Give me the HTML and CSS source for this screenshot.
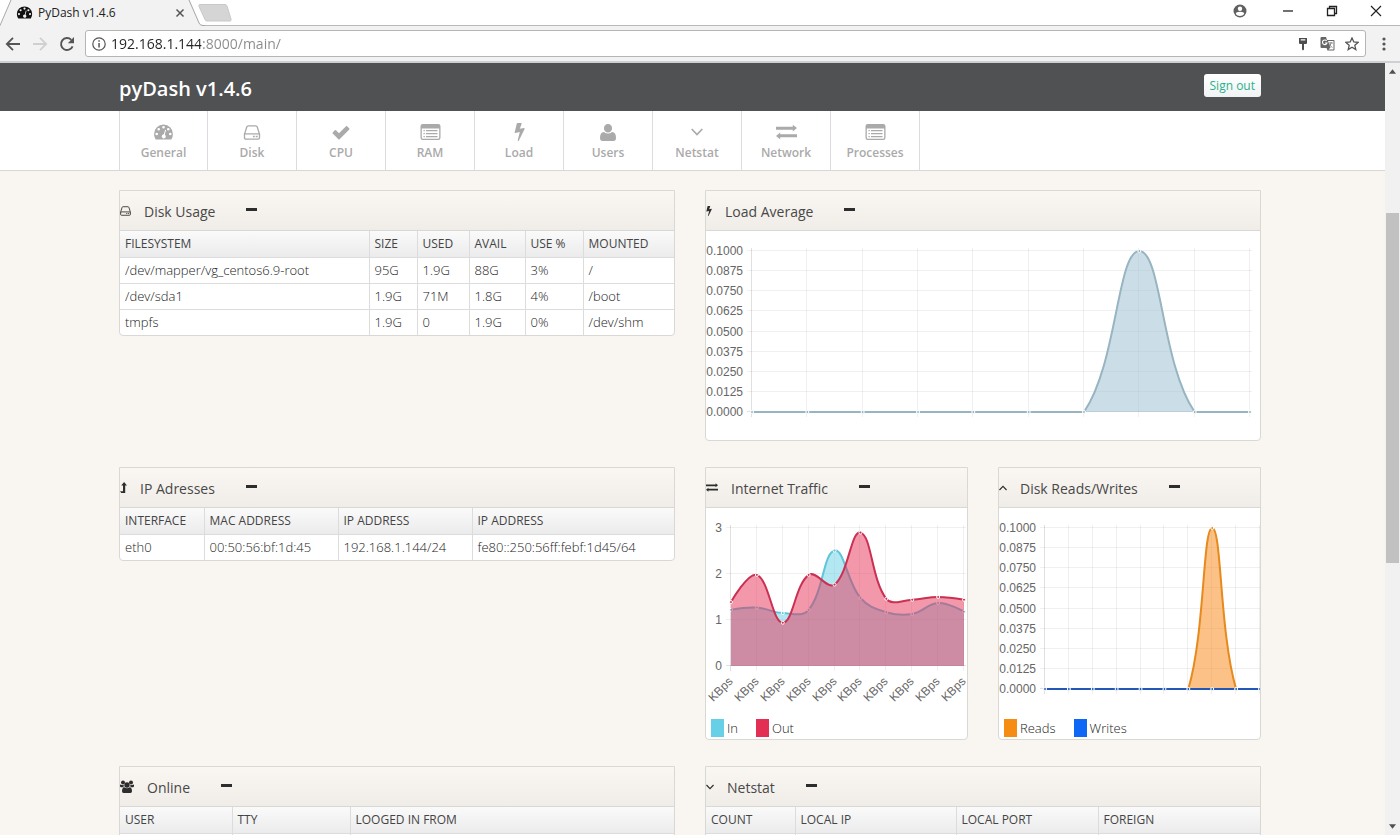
FILE: index.html
```html
<!DOCTYPE html>
<html lang="en">
<head>
<meta charset="utf-8">
<title>PyDash v1.4.6</title>
<link rel="stylesheet" href="styles.css">
</head>
<body>
<svg class="defs" aria-hidden="true">
  <symbol id="gauge" viewBox="0 0 21 17"><path fill-rule="evenodd" d="M10.500 .5A10 10 0 0 0 .5 10.500c0 2.100.6 4 1.600 5.600.2.300.5.400.8.400h15.200c.3 0 .6-.1.800-.4a10 10 0 0 0 1.600-5.600A10 10 0 0 0 10.500.5zM3.300 9.200a1.400 1.400 0 1 1 0 2.800 1.400 1.400 0 0 1 0-2.800zM5.400 4.200a1.400 1.400 0 1 1 0 2.800 1.400 1.400 0 0 1 0-2.800zM10.500 2a1.400 1.400 0 1 1 0 2.800 1.400 1.400 0 0 1 0-2.800zM15.600 4.200a1.400 1.400 0 1 1 0 2.800 1.400 1.400 0 0 1 0-2.800zM17.700 9.200a1.400 1.400 0 1 1 0 2.800 1.400 1.400 0 0 1 0-2.800zM12.200 6l1 .3-1.300 5a2.200 2.200 0 1 1-1-.3z"/></symbol>
  <symbol id="disk" viewBox="0 0 18 16"><path fill="none" stroke="currentColor" stroke-width="1.400" d="M1 9.500h16v4q0 1.500-1.500 1.500h-13Q1 15 1 13.500zM1.200 9.200 3.400 2.200Q3.800 1 5 1h8q1.200 0 1.600 1.200l2.200 7"/><path d="M10 11.500h2v1.500h-2zM13 11.500h2v1.500h-2z"/></symbol>
  <symbol id="check" viewBox="0 0 18 14"><path d="M17.300 2.900 15.200.8q-.6-.5-1.200 0L7 7.800 4 4.800q-.6-.5-1.200 0L.7 6.900q-.5.600 0 1.200l5.700 5.600q.6.500 1.200 0l9.700-9.600q.5-.6 0-1.200z"/></symbol>
  <symbol id="list" viewBox="0 0 20 16"><path fill-rule="evenodd" d="M2.200 0h15.600Q20 0 20 2.200v11.600q0 2.200-2.200 2.200H2.200Q0 16 0 13.800V2.200Q0 0 2.200 0zM1.300 4.500v9q0 1.200 1.200 1.200h15q1.200 0 1.200-1.200v-9z"/><path d="M3 6h1.300v1.200H3zM5.500 6H17v1.200H5.500zM3 9h1.300v1.200H3zM5.500 9H17v1.200H5.500zM3 12h1.300v1.200H3zM5.500 12H17v1.200H5.500z"/></symbol>
  <symbol id="bolt" viewBox="0 0 11 18"><path d="M10.400 5.200q.4.300.2.700L4.800 17.700q-.3.400-.8.300-.4-.2-.3-.6L5.800 8.900l-4.400 1.100q-.8 0-.7-.7L2.800.5q.2-.5.700-.5h3.500q.9.200.6.900L5.800 5.700l4.200-.8z"/></symbol>
  <symbol id="user" viewBox="0 0 16 17"><path d="M12 4.200A4 4 0 0 1 8 8.500a4 4 0 0 1-4-4.300A4 4 0 0 1 8 0a4 4 0 0 1 4 4.200zM4 8q1.600 1.500 4 1.500T12 8q4 .2 4 6 0 3-2.500 3h-11Q0 17 0 14q0-5.800 4-6z"/></symbol>
  <symbol id="down" viewBox="0 0 12 8"><path fill="none" stroke="currentColor" stroke-width="1.700" d="M.7 1 6 6.500 11.300 1"/></symbol>
  <symbol id="up" viewBox="0 0 12 8"><path fill="none" stroke="currentColor" stroke-width="1.700" d="M.7 7 6 1.500 11.300 7"/></symbol>
  <symbol id="swap" viewBox="0 0 20 14"><path d="M0 2h16V0L20 3.300 16 6.600V4.800H0zM20 9.200H4V7.400L0 10.700 4 14v-2H20z"/></symbol>
  <symbol id="level" viewBox="0 0 7 11"><path d="M0 9.200h3V3.600H1.200L4.100 0 7 3.600H5.200V11H1.300z"/></symbol>
  <symbol id="group" viewBox="0 0 14 13"><circle cx="3" cy="2.500" r="2"/><circle cx="11" cy="2.500" r="2"/><path d="M0 4.500q1 0 2 .6l2 .2-.7 2H.8Q0 7 0 6zM14 4.500q-1 0-2 .6l-2 .2.700 2h2.500Q14 7 14 6z"/><circle cx="7" cy="5" r="2.700"/><path d="M4.400 7.300q2.600 1.800 5.200 0 2.400.3 2.400 4 0 1.700-1.500 1.700h-7Q2 13 2 11.300q0-3.700 2.400-4z"/></symbol>
</svg>

<header class="browser">
  <div class="tabstrip">
    <div class="tab">
      <svg class="tab-shape" viewBox="0 0 205 26" aria-hidden="true"><path d="M0 26 11 0h179l11 25.500h4V26z" fill="#f2f2f2"/><path d="M0 25.500 11 0M189 0l10 23q1 2.500 4 2.500h2" fill="none" stroke="#a8a8a8"/></svg>
      <svg class="fav" aria-hidden="true"><use href="#gauge"/></svg>
      <span class="tab-title">PyDash v1.4.6</span>
      <button class="tab-close" aria-label="Close tab"><svg viewBox="0 0 10 10"><path d="m1.500 1.500 7 7m0-7-7 7" stroke="#555" stroke-width="1.500"/></svg></button>
    </div>
    <button class="newtab" aria-label="New tab"><svg viewBox="0 0 34 18"><path d="M2 .5h25q1.500 0 2 1.500l4 13q.6 2-1 2H9q-1.500 0-2-1.500L1 2.500Q.4.500 2 .5z" fill="#d5d5d5" stroke="#c9c9c9"/></svg></button>
    <div class="window-buttons">
      <button aria-label="Profile"><svg width="14" height="14" viewBox="0 0 14 14"><circle cx="7" cy="7" r="6.500" fill="#606060"/><circle cx="7" cy="4.800" r="2.200" fill="#fff"/><path d="M2.800 10q0-2.300 4.200-2.300t4.200 2.300Q9.700 12 7 12t-4.200-2z" fill="#fff"/></svg></button>
      <button aria-label="Minimize"><svg width="12" height="12" viewBox="0 0 12 12"><path d="M1 6h10" stroke="#222" stroke-width="1.300"/></svg></button>
      <button aria-label="Restore"><svg width="12" height="12" viewBox="0 0 12 12" fill="none" stroke="#222" stroke-width="1.300"><path d="M1.500 3.500h7v7h-7zM3.500 3.500v-2h7v7h-2"/></svg></button>
      <button aria-label="Close"><svg width="12" height="12" viewBox="0 0 12 12"><path d="m1 1 10 10M11 1 1 11" stroke="#222" stroke-width="1.200"/></svg></button>
    </div>
  </div>
  <div class="toolbar">
    <button aria-label="Back"><svg width="16" height="16" viewBox="0 0 16 16" fill="none" stroke="#555" stroke-width="1.800"><path d="M15 8H2M8 1.800 1.800 8 8 14.200"/></svg></button>
    <button aria-label="Forward"><svg width="16" height="16" viewBox="0 0 16 16" fill="none" stroke="#d0d0d0" stroke-width="1.800"><path d="M1 8h13M8 1.800 14.200 8 8 14.200"/></svg></button>
    <button aria-label="Reload"><svg width="16" height="16" viewBox="0 0 16 16"><path d="M13.600 10.300A6 6 0 1 1 12.300 3.800" fill="none" stroke="#555" stroke-width="1.900"/><path d="M15 1v6.200H8.800z" fill="#555"/></svg></button>
    <div class="omnibox">
      <svg width="14" height="14" viewBox="0 0 14 14"><circle cx="7" cy="7" r="6.200" fill="none" stroke="#555" stroke-width="1.200"/><path d="M6.300 6h1.500v4.500H6.300zM6.300 3.300h1.500v1.500H6.300z" fill="#555"/></svg>
      <input class="url" type="text" value="192.168.1.144:8000/main/" aria-label="Address">
      <button aria-label="Passwords"><svg width="14" height="14" viewBox="0 0 14 14"><path fill-rule="evenodd" d="M3 1h8v5q0 1-1 1H8v5.500l-1 1-1-1V7H4Q3 7 3 6zm1.700 1.300v1.200h4.600V2.300z" fill="#4d4d4d"/></svg></button>
      <button aria-label="Translate"><svg width="15" height="14" viewBox="0 0 15 14"><path d="M1.500 0H6l1 3h6.500q1 0 1 1v8.500q0 1-1 1H7.500l-1-2.500h-5q-1 0-1-1V1q0-1 1-1z" fill="#666"/><path d="M8 4h5.500v8.500H8.500l2-2z" fill="#fff"/><path d="M6.700 4A2.300 2.300 0 1 0 7 6H5" fill="none" stroke="#fff" stroke-width="1.100"/><path d="M8.500 6H13M11 5v1q-.5 2.500-2 4M9.500 7.500q1 2 3 3" fill="none" stroke="#777" stroke-width=".8"/></svg></button>
      <button aria-label="Bookmark"><svg width="14" height="14" viewBox="0 0 14 14"><path d="m7 1 1.800 4 4.300.4-3.300 2.900 1 4.300L7 10.300l-3.800 2.300 1-4.300L.9 5.400 5.200 5z" fill="none" stroke="#555" stroke-width="1.300"/></svg></button>
    </div>
    <button aria-label="Menu"><svg width="4" height="14" viewBox="0 0 4 14" fill="#555"><circle cx="2" cy="2" r="1.600"/><circle cx="2" cy="7" r="1.600"/><circle cx="2" cy="12" r="1.600"/></svg></button>
  </div>
</header>

<div class="viewport">
  <div class="page">
    <div class="topbar">
      <h1>pyDash v1.4.6</h1>
      <a class="signout" href="#">Sign out</a>
    </div>
    <nav class="mainnav">
      <a href="#"><svg class="i-gauge"><use href="#gauge"/></svg>General</a>
      <a href="#"><svg class="i-disk"><use href="#disk"/></svg>Disk</a>
      <a href="#"><svg class="i-disk"><use href="#check"/></svg>CPU</a>
      <a href="#"><svg class="i-gauge"><use href="#list"/></svg>RAM</a>
      <a href="#"><svg class="i-bolt"><use href="#bolt"/></svg>Load</a>
      <a href="#"><svg class="i-user"><use href="#user"/></svg>Users</a>
      <a href="#"><svg class="i-down"><use href="#down"/></svg>Netstat</a>
      <a href="#"><svg class="i-gauge"><use href="#swap"/></svg>Network</a>
      <a href="#"><svg class="i-gauge"><use href="#list"/></svg>Processes</a>
    </nav>
    <main class="board">
      <section class="widget">
        <div class="head"><svg class="w11"><use href="#disk"/></svg><h2>Disk Usage</h2><button class="fold" aria-label="Collapse Disk Usage"></button></div>
        <table class="grid disks">
          <thead><tr><th>FILESYSTEM</th><th>SIZE</th><th>USED</th><th>AVAIL</th><th>USE %</th><th>MOUNTED</th></tr></thead>
          <tbody>
            <tr><td>/dev/mapper/vg_centos6.9-root</td><td>95G</td><td>1.9G</td><td>88G</td><td>3%</td><td>/</td></tr>
            <tr><td>/dev/sda1</td><td>1.9G</td><td>71M</td><td>1.8G</td><td>4%</td><td>/boot</td></tr>
            <tr><td>tmpfs</td><td>1.9G</td><td>0</td><td>1.9G</td><td>0%</td><td>/dev/shm</td></tr>
          </tbody>
        </table>
      </section>

      <section class="widget">
        <div class="head"><svg class="w6"><use href="#bolt"/></svg><h2>Load Average</h2><button class="fold" aria-label="Collapse Load Average"></button></div>
        <div id="load" class="chart"></div>
      </section>

      <section class="widget">
        <div class="head"><svg class="w7"><use href="#level"/></svg><h2>IP Adresses</h2><button class="fold" aria-label="Collapse IP Adresses"></button></div>
        <table class="grid ips">
          <thead><tr><th>INTERFACE</th><th>MAC ADDRESS</th><th>IP ADDRESS</th><th>IP ADDRESS</th></tr></thead>
          <tbody><tr><td>eth0</td><td>00:50:56:bf:1d:45</td><td>192.168.1.144/24</td><td>fe80::250:56ff:febf:1d45/64</td></tr></tbody>
        </table>
      </section>

      <div class="pair">
        <section class="widget">
          <div class="head"><svg class="w12"><use href="#swap"/></svg><h2>Internet Traffic</h2><button class="fold" aria-label="Collapse Internet Traffic"></button></div>
          <div id="traffic" class="chart"></div>
          <ul class="legend"><li class="in">In</li><li class="out">Out</li></ul>
        </section>
        <section class="widget">
          <div class="head"><svg class="w8"><use href="#up"/></svg><h2>Disk Reads/Writes</h2><button class="fold" aria-label="Collapse Disk Reads/Writes"></button></div>
          <div id="diskio" class="chart"></div>
          <ul class="legend"><li class="reads">Reads</li><li class="writes">Writes</li></ul>
        </section>
      </div>

      <section class="widget">
        <div class="head"><svg class="w14"><use href="#group"/></svg><h2>Online</h2><button class="fold" aria-label="Collapse Online"></button></div>
        <table class="grid online">
          <thead><tr><th>USER</th><th>TTY</th><th>LOOGED IN FROM</th></tr></thead>
          <tbody><tr><td></td><td></td><td></td></tr></tbody>
        </table>
      </section>

      <section class="widget">
        <div class="head"><svg class="w8"><use href="#down"/></svg><h2>Netstat</h2><button class="fold" aria-label="Collapse Netstat"></button></div>
        <table class="grid netstat">
          <thead><tr><th>COUNT</th><th>LOCAL IP</th><th>LOCAL PORT</th><th>FOREIGN</th></tr></thead>
          <tbody><tr><td></td><td></td><td></td><td></td></tr></tbody>
        </table>
      </section>
    </main>
  </div>
  <div class="scrollbar" aria-hidden="true">
    <svg viewBox="0 0 8 5"><path d="M4 0 8 5H0z"/></svg>
    <div class="track"><div class="thumb"></div></div>
    <svg viewBox="0 0 8 5"><path d="M0 0h8L4 5z"/></svg>
  </div>
</div>
<script src="charts.js"></script>
</body>
</html>
```

FILE: styles.css
```css
* { box-sizing: border-box; }
body {
  margin: 0;
  height: 100vh;
  overflow: hidden;
  display: flex;
  flex-direction: column;
  font-family: "Open Sans", "Noto Sans", sans-serif;
  font-size: 12px;
  color: #444;
}
svg { display: block; }
svg:not([fill]) { fill: currentColor; }
button { border: 0; padding: 0; background: none; font: inherit; color: inherit; }
h1, h2, ul { margin: 0; padding: 0; }
a { text-decoration: none; }
.defs { position: absolute; width: 0; height: 0; }

/* browser frame */
.browser { flex: none; background: #fff; }
.tabstrip { display: flex; align-items: center; height: 26px; border-bottom: 1px solid #b8b8b8; }
.tab { position: relative; display: flex; align-items: center; width: 197px; height: 26px; padding: 0 12px 0 16px; }
.tab-shape { position: absolute; left: 0; top: 0; width: 205px; height: 26px; }
.fav { position: relative; width: 17px; height: 13px; color: #111; }
.tab-title { position: relative; flex: 1; padding-left: 5px; color: #222; }
.tab-close { position: relative; width: 10px; height: 10px; }
.newtab { width: 34px; height: 18px; margin-left: 1px; }
.window-buttons { flex: 1; display: flex; justify-content: flex-end; gap: 32px; padding-right: 18px; align-items: center; height: 22px; padding-bottom: 3px; }
.window-buttons button:first-child { margin-right: 3px; }
.toolbar { display: flex; align-items: center; height: 37px; padding: 0 14px 0 5px; gap: 11px; background: #f2f2f2; border-bottom: 2px solid #cfd0d1; }
.omnibox { flex: 1; display: flex; align-items: center; gap: 10px; height: 27px; margin: 0 5px 0 -1px; padding: 0 6px; background: #fff; border: 1px solid #b5b5b5; border-radius: 3px; }
.url {
  flex: 1;
  min-width: 0;
  margin-left: -5px;
  padding: 0;
  border: 0;
  outline: 0;
  font: 14px "Open Sans", sans-serif;
  color: transparent;
  background: linear-gradient(to right, #222 90px, #8a8a8a 90px);
  -webkit-background-clip: text;
  background-clip: text;
}

/* page */
.viewport { flex: 1; display: flex; min-height: 0; }
.page { flex: 1; min-width: 0; overflow: hidden; background: #f9f6f1; }
.topbar { display: flex; align-items: center; justify-content: space-between; height: 48px; padding: 0 124px 0 119px; background: #505153; }
h1 { font-size: 20px; font-weight: 600; line-height: 28px; padding-top: 4px; color: #fff; }
.signout { padding: 0 6px; line-height: 23px; margin-bottom: 3px; border-radius: 3px; background: linear-gradient(#fff, #f0f2f4); color: #2bb18a; }
.mainnav { display: flex; height: 60px; padding-left: 119px; background: #fff; border-bottom: 1px solid #d9d7d5; }
.mainnav a { display: grid; grid-template-rows: 18px 18px; row-gap: 2px; align-content: start; place-items: center; width: 89px; padding-top: 12px; border-right: 1px solid #dddbdd; font-weight: 600; color: #aaa; }
.mainnav a:first-child { border-left: 1px solid #dddbdd; }
.i-gauge { width: 21px; height: 16px; }
.i-disk { width: 18px; height: 15px; }
.i-bolt { width: 11px; height: 18px; }
.i-user { width: 16px; height: 17px; }
.i-down { width: 12px; height: 8px; }

.board { display: grid; grid-template-columns: 1fr 1fr; gap: 26px 30px; align-items: start; padding: 19px 124px 0 119px; }
.pair { display: grid; grid-template-columns: 1fr 1fr; gap: 30px; }
.widget { min-width: 0; overflow: hidden; background: #fff; border: 1px solid #dad8d5; border-radius: 0 0 4px 4px; }
.head { display: flex; align-items: center; height: 40px; border-bottom: 1px solid #dad8d5; background: linear-gradient(#faf7f2, #f0ede8); color: #2d2d2d; }
h2 { margin: 0 31px 0 13px; padding-top: 2px; font-size: 14px; line-height: 20px; font-weight: 500; color: #484848; }
.fold { width: 11px; height: 3px; margin-bottom: 2px; background: #2d2d2d; }
.w6 { width: 6px; height: 12px; }
.w7 { width: 7px; height: 11px; }
.w8 { width: 8px; height: 6px; }
.w11 { width: 11px; height: 10px; }
.w12 { width: 12px; height: 9px; }
.w14 { width: 14px; height: 13px; }

.grid { width: 100%; table-layout: fixed; border-collapse: collapse; }
.grid th, .grid td { height: 26px; padding: 0 5px; text-align: left; white-space: nowrap; border-left: 1px solid #dcdcdc; border-top: 1px solid #dcdcdc; }
.grid th { font-size: 12px; font-weight: 500; border-top: 0; background: linear-gradient(#fafafa, #ebebec); }
.grid td { font-size: 13px; line-height: 18px; font-weight: 300; color: #222; }
.grid th:first-child, .grid td:first-child { border-left: 0; }
.disks th:nth-child(2) { width: 48px; }
.disks th:nth-child(3) { width: 52px; }
.disks th:nth-child(4) { width: 56px; }
.disks th:nth-child(5) { width: 58px; }
.disks th:nth-child(6) { width: 91px; }
.ips th:nth-child(1) { width: 84px; }
.ips th:nth-child(2), .ips th:nth-child(3) { width: 134px; }
.online th:nth-child(1) { width: 112px; }
.online th:nth-child(2) { width: 118px; }
.netstat th:nth-child(1) { width: 89px; }
.netstat th:nth-child(2) { width: 161px; }
.netstat th:nth-child(3) { width: 142px; }

.chart svg { width: 100%; height: auto; }
.chart text { font: 12px "Liberation Sans", Arial, sans-serif; fill: #666; }
.legend { display: flex; gap: 18px; padding: 0 6px 2px 5px; list-style: none; }
.legend li { display: flex; align-items: center; gap: 3px; height: 18px; font-size: 13px; font-weight: 300; color: #222; }
.legend li::before { content: ""; width: 13px; height: 18px; background: currentColor; }
.legend .in::before { background: #68d0e6; }
.legend .out::before { background: #e42f55; }
.legend .reads::before { background: #f58c13; }
.legend .writes::before { background: #0f68f5; }

.scrollbar { display: flex; flex-direction: column; align-items: center; width: 15px; padding: 6px 0; background: #f1f1f1; color: #505050; }
.scrollbar svg { width: 7px; height: 5px; }
.track { flex: 1; width: 13px; padding-top: 139px; }
.thumb { height: 350px; background: #c1c1c1; }
```

FILE: charts.js
```javascript
// Small smooth line chart, drawn as SVG.
const TENSION = 0.4;

function curve(points, top, bottom) {
  const clamp = y => Math.max(top, Math.min(bottom, y));
  const handles = points.map((p, i) => {
    const a = points[i - 1] || p;
    const b = points[i + 1] || p;
    const da = Math.hypot(p[0] - a[0], p[1] - a[1]);
    const db = Math.hypot(b[0] - p[0], b[1] - p[1]);
    const edge = a === p || b === p;
    const fa = edge ? 0 : TENSION * da / (da + db);
    const fb = edge ? 0 : TENSION * db / (da + db);
    return {
      before: [p[0] - fa * (b[0] - a[0]), clamp(p[1] - fa * (b[1] - a[1]))],
      after: [p[0] + fb * (b[0] - a[0]), clamp(p[1] + fb * (b[1] - a[1]))]
    };
  });
  let d = `M${points[0]}`;
  for (let i = 1; i < points.length; i++) {
    d += `C${handles[i - 1].after} ${handles[i].before} ${points[i]}`;
  }
  return d;
}

function draw(id, c) {
  const n = c.series[0].values.length;
  const x = i => c.left + i * (c.right - c.left) / (n - 1);
  const y = v => c.bottom - v / c.max * (c.bottom - c.top);
  let out = '';
  for (let i = 0; i <= c.steps; i++) {
    const v = c.max * i / c.steps;
    const gy = Math.round(y(v)) - 0.5;
    out += `<path d="M${c.left - 5} ${gy}H${c.right + 2}" stroke="#000" stroke-opacity="${i ? 0.06 : 0.12}"/>`;
    out += `<text x="${c.left - 9}" y="${gy + 4}" text-anchor="end">${v.toFixed(c.digits)}</text>`;
  }
  for (let i = 0; i < n; i++) {
    const gx = Math.round(x(i)) - 0.5;
    out += `<path d="M${gx} ${c.top - 3}V${c.bottom + 5}" stroke="#000" stroke-opacity="${i ? 0.06 : 0.12}"/>`;
    if (c.label) {
      out += `<text transform="translate(${gx + 3} ${c.bottom + 16}) rotate(-45)" text-anchor="end">${c.label}</text>`;
    }
  }
  for (const s of c.series) {
    const pts = s.values.map((v, i) => [x(i), y(v)]);
    const d = curve(pts, c.top, c.bottom);
    out += `<path d="${d}V${c.bottom}H${c.left}z" fill="${s.fill}"/>`;
    out += `<path d="${d}" fill="none" stroke="${s.stroke}" stroke-width="2"/>`;
    for (const p of pts) {
      out += `<circle cx="${p[0]}" cy="${p[1]}" r="1.5" fill="${s.stroke}" stroke="${s.dot || '#fff'}"/>`;
    }
  }
  document.getElementById(id).innerHTML =
    `<svg viewBox="0 0 ${c.width} ${c.height}" role="img" aria-label="${id}">${out}</svg>`;
}

const flat = [0, 0, 0, 0, 0, 0, 0, 0, 0, 0];
const spike = [0, 0, 0, 0, 0, 0, 0, 0.1, 0, 0];

draw('load', {
  width: 554, height: 209, left: 46, right: 544, top: 20, bottom: 181, max: 0.1, steps: 8, digits: 4,
  series: [{ values: spike, stroke: '#97b4c1', fill: 'rgba(151,187,205,.5)' }]
});
draw('traffic', {
  width: 261, height: 211, left: 25, right: 258, top: 20, bottom: 158, max: 3, steps: 3, digits: 0, label: 'KBps',
  series: [
    { values: [1.22, 1.27, 1.15, 1.22, 2.51, 1.48, 1.17, 1.13, 1.37, 1.18], stroke: '#5fc5d9', fill: 'rgba(104,208,230,.5)' },
    { values: [1.39, 1.98, 0.94, 1.98, 1.77, 2.9, 1.46, 1.44, 1.5, 1.44], stroke: '#cb3052', fill: 'rgba(232,48,86,.5)' }
  ]
});
draw('diskio', {
  width: 261, height: 211, left: 46, right: 261, top: 20, bottom: 181, max: 0.1, steps: 8, digits: 4,
  series: [
    { values: spike, stroke: '#e68a1c', fill: 'rgba(247,132,15,.5)' },
    { values: flat, stroke: '#2458b8', fill: 'none' }
  ]
});
```
